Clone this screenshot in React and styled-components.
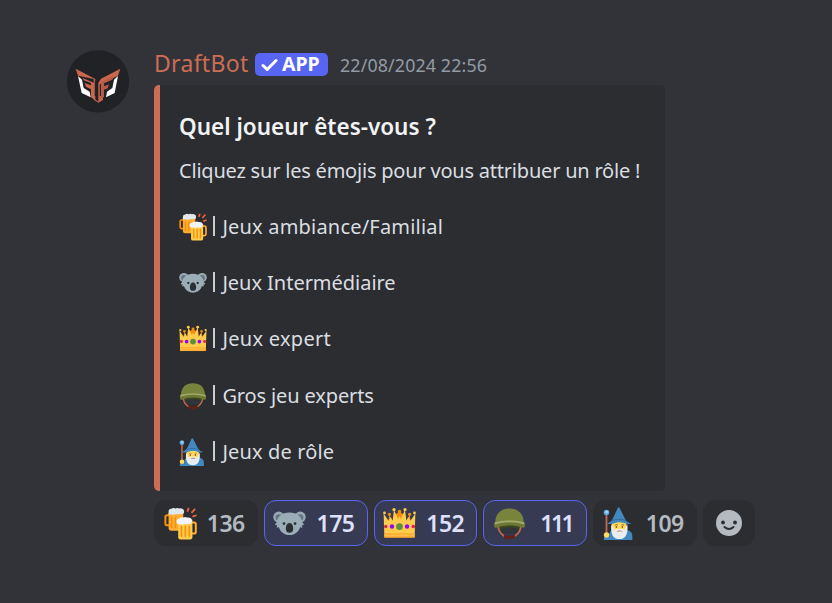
import React from "react";
import styled, { createGlobalStyle } from "styled-components";

const GlobalStyle = createGlobalStyle`
  * { box-sizing: border-box; }
  body {
    margin: 0;
    background: #313338;
    font-family: "Noto Sans", "Open Sans", sans-serif;
  }
`;

const Message = styled.article`
  display: flex;
  align-items: flex-start;
  width: 832px;
  height: 603px;
  padding: 50px 0 0 67px;
  background: #313338;
`;

const Avatar = styled.svg`
  flex: none;
  width: 62px;
  height: 63px;
  margin-right: 25px;
`;

const Content = styled.div`
  display: flex;
  flex-direction: column;
  align-items: flex-start;
`;

const Header = styled.header`
  display: flex;
  align-items: center;
  height: 35px;
  padding-bottom: 6px;
  white-space: nowrap;
`;

const Author = styled.span`
  width: 101px;
  padding-bottom: 2px;
  font-size: 23px;
  letter-spacing: ${(p) => p.$spacing}px;
  line-height: 27px;
  color: #cd6d55;
`;

const AppTag = styled.span`
  display: flex;
  align-items: center;
  width: 73px;
  height: 23px;
  padding-left: 6px;
  border-radius: 5px;
  background: #5865f2;
  color: #fff;
  font-size: 19.5px;
  font-weight: 700;
  letter-spacing: ${(p) => p.$spacing}px;
  line-height: 21px;

  svg {
    width: 17px;
    height: 14px;
    margin-right: 4px;
  }
`;

const TagLabel = styled.span`
  height: 23px;
`;

const Timestamp = styled.time`
  margin-left: 12px;
  font-size: 17.8px;
  letter-spacing: ${(p) => p.$spacing}px;
  color: #949ba4;
`;

const Embed = styled.section`
  width: 511px;
  height: 406px;
  padding: 28px 0 0 19px;
  border-left: 6px solid #cc6d54;
  border-radius: 5px;
  background: #2b2d31;
  white-space: nowrap;
`;

const Title = styled.h3`
  margin: 0;
  height: 28px;
  font-size: 22.5px;
  font-weight: 600;
  line-height: 28px;
  letter-spacing: ${(p) => p.$spacing}px;
  color: #f2f3f5;
`;

const Intro = styled.p`
  margin: 16px 0 28px;
  height: 28px;
  font-size: 20px;
  line-height: 28px;
  letter-spacing: ${(p) => p.$spacing}px;
  color: #dbdee1;
`;

const RoleList = styled.ul`
  display: flex;
  flex-direction: column;
  gap: 28.2px;
  margin: 0;
  padding: 0;
  list-style: none;
`;

const Role = styled.li`
  display: flex;
  align-items: center;
  height: 28px;
  font-size: 20px;
  line-height: 28px;
  letter-spacing: ${(p) => p.$spacing}px;
  color: #dbdee1;
`;

const Bar = styled.span`
  width: 2px;
  height: 20px;
  margin: 0 7px 2px 6.4px;
  background: #c9ccd0;
`;

const EmojiSvg = styled.svg`
  flex: none;
  width: ${(p) => p.$size}px;
  height: ${(p) => p.$size}px;
`;

const Reactions = styled.div`
  display: flex;
  gap: 6px;
  margin-top: 9px;
`;

const Reaction = styled.button`
  display: flex;
  align-items: center;
  justify-content: space-between;
  width: 103.75px;
  height: 46px;
  padding: 0 ${(p) => p.$inset ?? 12}px 0 8.5px;
  border: 1px solid ${(p) => (p.$active ? "#5865f2" : "#2b2d31")};
  border-radius: 12px;
  background: ${(p) => (p.$active ? "#373a53" : "#2b2d31")};
  color: ${(p) => (p.$active ? "#dee0fc" : "#b5bac1")};
  font-family: inherit;
  font-size: 23px;
  font-weight: 600;
  letter-spacing: ${(p) => p.$spacing ?? -0.5}px;
`;

const AddReaction = styled(Reaction)`
  width: 52px;
  padding: 0;
  justify-content: center;
`;

function Beers() {
  return (
    <>
      <path d="M7 9H3.5Q1.5 9 1.5 11v7q0 2 2 2H7" fill="none" stroke="#f4900c" strokeWidth="2.2" />
      <path d="M5 6h16v20H8q-3 0-3-3z" fill="#ffac33" />
      <path d="M8.2 11v12M12.6 11v12" stroke="#f4900c" strokeWidth="1.8" />
      <path d="M5 8.5V5q0-3 3-3 2-1.5 4.5-.5 2-1 4 0 5-.5 5.500 3.5 0 3-3 3H12q-2 1.5-3.5 0z" fill="#e1e8ed" />
      <path d="M30 17h3q1.700 0 1.700 2v8q0 2-2 2H30" fill="none" stroke="#ffac33" strokeWidth="2.2" />
      <path d="M15.5 14H31v19q0 2.500-2.500 2.500H18q-2.500 0-2.500-2.500z" fill="#ffcc4d" />
      <path d="M19 21v11M23.3 21v11M27.6 21v11" stroke="#f4900c" strokeWidth="1.8" strokeLinecap="round" />
      <path d="M16 19q-2.500-.5-2.500-3.200 0-3 3-3.300 2-2 4.500-1 2-1 4 0 5-.5 5.500 3 .5 4-3 4H22q-1 1.500-3 .3z" fill="#f0f4f7" />
      <path d="M27 1l-1.500 4M34 2l-4 4.500M35.500 9l-4.500 1.500" stroke="#f4633b" strokeWidth="2" />
    </>
  );
}

function Koala() {
  return (
    <>
      <circle cx="6.3" cy="11" r="6" fill="#99aab5" />
      <circle cx="29.7" cy="11" r="6" fill="#99aab5" />
      <circle cx="6.5" cy="11.500" r="3.7" fill="#66757f" />
      <circle cx="29.5" cy="11.500" r="3.7" fill="#66757f" />
      <path d="M18 6C9.500 6 4.500 11 4 17q-2 1-1.500 3l2-.5-.5 3 2.500-.5C8 27 12 30.500 18 30.500S28 27 29.500 22l2.500.5-.5-3 2 .5q.5-2-1.500-3C31.500 11 26.500 6 18 6z" fill="#9badb7" />
      <path d="M18 17.500c3 0 4 3.500 4 6.500q0 4-4 4t-4-4c0-3 1-6.500 4-6.500z" fill="#292f33" />
      <circle cx="12" cy="18" r="1.5" fill="#292f33" />
      <circle cx="24" cy="18" r="1.5" fill="#292f33" />
    </>
  );
}

function Crown() {
  return (
    <>
      <path d="M4 27L7 8l4 10 3-10 4-3 4 3 3 10 4-10 3 19z" fill="#f4900c" />
      <g fill="#f4900c">
        <circle cx="7" cy="8" r="1.7" /><circle cx="18" cy="5" r="1.9" /><circle cx="29" cy="8" r="1.7" />
      </g>
      <path d="M1.500 33L.7 7l5.300 8L8.500 11l2 4L12 3l4.500 10L18 10l1.500 3L24 3l1.500 12 2-4 2.500 4L35.300 7l-.8 26z" fill="#ffcc4d" />
      <g fill="#ffcc4d">
        <circle cx="1.7" cy="6.500" r="1.5" /><circle cx="12" cy="2.800" r="1.8" /><circle cx="24" cy="2.800" r="1.8" /><circle cx="34.300" cy="6.500" r="1.5" />
      </g>
      <path d="M1.500 28.500h33V33.500h-33z" fill="#ffac33" />
      <path d="M2 30.800h32" stroke="#ffcc4d" />
      <circle cx="18" cy="21.300" r="3.7" fill="#5c913b" />
      <circle cx="9.8" cy="21.300" r="2.4" fill="#9300ff" />
      <circle cx="26.2" cy="21.300" r="2.4" fill="#9300ff" />
      <circle cx="3" cy="21.300" r="1.9" fill="#db224b" />
      <circle cx="33" cy="21.300" r="1.9" fill="#db224b" />
    </>
  );
}

function Helmet() {
  return (
    <>
      <path d="M6 17q12-4 24 0v7H6z" fill="#3b4520" />
      <path d="M8 24q10-4 20 0v5H8z" fill="#2f3538" />
      <path d="M5.500 20c0 6 3 9.500 7 12M30.500 20c0 6-3 9.500-7 12" fill="none" stroke="#be6b51" strokeWidth="1.8" />
      <path d="M12 30.500q6 1.500 12 0v3q-6 3-12 0z" fill="#662113" />
      <path d="M2.500 16C3 6.500 9 1.500 18 1.500S33 6.500 33.500 16v3q-15-4-31 0z" fill="#78843b" />
      <path d="M2 16.500q15.500-4 32 0 2 4-.5 6.500-15-6-31 0-2.500-2-.5-6.500z" fill="#6b7836" />
      <path d="M2 16.500q16-4 32 0l.3 2.500q-16.300-5-32.600 0z" fill="#a2aa69" />
    </>
  );
}

function Wizard() {
  return (
    <>
      <path d="M7 36v-6q0-4 4-5h15q6 1 6 7v4z" fill="#4289c1" />
      <path d="M3.800 6v30" stroke="#bf6952" strokeWidth="2" />
      <circle cx="3.8" cy="6" r="3" fill="#5dadec" />
      <circle cx="4" cy="5.4" r="1.3" fill="#bbddf5" />
      <path d="M1 36v-3q3-2 7 0v3z" fill="#4289c1" />
      <circle cx="3.9" cy="30.5" r="3" fill="#ffdc5d" />
      <g transform="translate(-.9)">
        <path d="M10.500 16h16v9q-2 5-8 5t-8-5z" fill="#ffdc5d" />
        <path d="M10 19q2.500 2 2.500 6 6-2.500 12.500 0 0-4 2.500-6Q29 35 18.700 35T10 19z" fill="#e8edf0" />
        <path d="M14 20q1.500-1.500 3 0M21 20q1.500-1.500 3 0" fill="none" stroke="#b77b42" strokeWidth="1.1" />
        <circle cx="15.500" cy="21.800" r=".9" fill="#662113" />
        <circle cx="22" cy="21.800" r=".9" fill="#662113" />
        <path d="M15.500 27q3.500-3 7 0-3.500-1-7 0z" fill="#be5b46" />
        <path d="M5 18q5-1.500 7-6L17 1q1-1.500 2 0l6 12q2 4 7 5-5 1.500-8-.5-5.500-2-10 0-4 2-9 .5z" fill="#4289c1" />
        <path d="M11.500 14q7.500-2.500 14 0l1 1.800q-8-3-16 0z" fill="#35719f" />
      </g>
    </>
  );
}

const drawings = { beers: Beers, koala: Koala, crown: Crown, helmet: Helmet, wizard: Wizard };

function Emoji({ name, size }) {
  const Drawing = drawings[name];
  return (
    <EmojiSvg viewBox="0 0 36 36" $size={size} aria-hidden="true">
      <Drawing />
    </EmojiSvg>
  );
}

function BotAvatar() {
  return (
    <Avatar viewBox="21 30 186 189" aria-label="DraftBot">
      <circle cx="114" cy="124" r="93.5" fill="#212226" />
      <path d="M47 86l59 31v61l9 7v-56l8-13 58-30-7 21-45 23v50l-14 8-14-9v-62L54 107z" fill="#c9664e" />
      <path d="M68 114l37 16v50l-12-8v-24l-15-8-4-11 19 7v-7l-22-8z" fill="#c9664e" />
      <path d="M122 126l38-17-3 10-25 11v9l15-6-4 12-11 4v22l-10 7z" fill="#b95b46" />
      <path d="M106 122v46M121 132v36" stroke="#212226" strokeWidth="3.5" />
      <path d="M54 108l12 11 5 25 18 11 3 17-27-13z" fill="#fff" />
      <path d="M174 108l-12 11-5 25-16 11-3 17 26-13z" fill="#fff" />
    </Avatar>
  );
}

const roles = [
  { emoji: "beers", label: "Jeux ambiance/Familial", spacing: 0.2 },
  { emoji: "koala", label: "Jeux Intermédiaire", spacing: -0.03 },
  { emoji: "crown", label: "Jeux expert", spacing: 0.3 },
  { emoji: "helmet", label: "Gros jeu experts", spacing: -0.13 },
  { emoji: "wizard", label: "Jeux de rôle", spacing: 0.15 },
];

const reactions = [
  { emoji: "beers", count: 136 },
  { emoji: "koala", count: 175, active: true },
  { emoji: "crown", count: 152, active: true },
  { emoji: "helmet", count: 111, active: true, spacing: -2.6, inset: 14 },
  { emoji: "wizard", count: 109 },
];

export default function App() {
  return (
    <>
      <GlobalStyle />
      <Message>
        <BotAvatar />
        <Content>
          <Header>
            <Author $spacing={0.3}>DraftBot</Author>
            <AppTag $spacing={0}>
              <svg viewBox="0 0 17 14" aria-hidden="true">
                <path d="M2 7.500l4.200 4L15 2.500" fill="none" stroke="#fff" strokeWidth="3" strokeLinecap="round" strokeLinejoin="round" />
              </svg>
              <TagLabel>APP</TagLabel>
            </AppTag>
            <Timestamp $spacing={0.15}>22/08/2024 22:56</Timestamp>
          </Header>
          <Embed>
            <Title $spacing={0}>Quel joueur êtes-vous ?</Title>
            <Intro $spacing={-0.21}>Cliquez sur les émojis pour vous attribuer un rôle !</Intro>
            <RoleList>
              {roles.map((role) => (
                <Role key={role.emoji} $spacing={role.spacing}>
                  <Emoji name={role.emoji} size={28} />
                  <Bar />
                  {role.label}
                </Role>
              ))}
            </RoleList>
          </Embed>
          <Reactions>
            {reactions.map((r) => (
              <Reaction key={r.emoji} $active={r.active} $spacing={r.spacing} $inset={r.inset}>
                <Emoji name={r.emoji} size={33} />
                {r.count}
              </Reaction>
            ))}
            <AddReaction aria-label="Ajouter une réaction">
              <EmojiSvg viewBox="0 0 26 26" $size={26}>
                <circle cx="13" cy="13" r="13" fill="#b5bac1" />
                <circle cx="7" cy="12.5" r="1.9" fill="#2b2d31" />
                <circle cx="19" cy="12.5" r="1.9" fill="#2b2d31" />
                <path d="M8.500 17q4.500 4 9 0" fill="none" stroke="#2b2d31" strokeWidth="2" strokeLinecap="round" />
              </EmojiSvg>
            </AddReaction>
          </Reactions>
        </Content>
      </Message>
    </>
  );
}
